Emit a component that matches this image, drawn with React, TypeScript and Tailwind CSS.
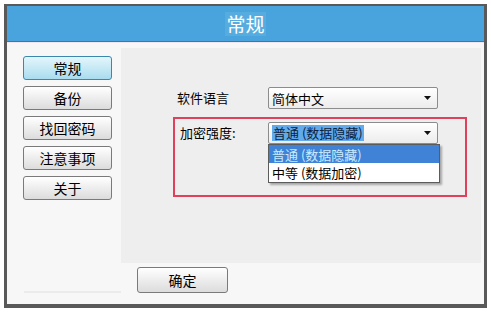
const font = "font-['Noto_Sans_CJK_SC','Noto_Sans',sans-serif]";

const navItems = ["常规", "备份", "找回密码", "注意事项", "关于"];

function Arrow() {
  return (
    <svg width="7" height="4" viewBox="0 0 7 4" className="shrink-0">
      <path d="M0 0 L7 0 L3.5 4 Z" fill="#111" />
    </svg>
  );
}

function Select({ children }: { children: React.ReactNode }) {
  return (
    <div className="flex h-[22px] w-[170px] items-center justify-between rounded-[2px] border border-[#8c8c8c] bg-gradient-to-b from-white to-[#ececec] pl-[3px] pr-[6px]">
      {children}
      <Arrow />
    </div>
  );
}

export default function App() {
  return (
    <div className={`h-[319px] w-[491px] overflow-hidden bg-white pl-[4px] pt-[4px] ${font}`}>
      <div className="flex h-[304px] w-[483px] flex-col border-x-[3px] border-b-[4px] border-t-[2px] border-[#595959] bg-[#f7f7f7]">
        <div className="flex h-[36px] shrink-0 items-center justify-center border-b border-[#3a78b0] bg-[#49a3dc]">
          <span className="bg-[#57acdf] px-[1px] text-[19px] leading-[24px] text-white">常规</span>
        </div>
        <div className="flex flex-1 border-t border-[#f1e4ea]">
          <div className="flex w-[114px] shrink-0 flex-col gap-[6px] pl-[16px] pt-[13px]">
            {navItems.map((item, i) => (
              <div
                key={item}
                className={`flex h-[24px] w-[89px] items-center justify-center rounded-[3px] border text-[14px] leading-none text-black ${
                  i === 0
                    ? "border-[#3b87ae] bg-gradient-to-b from-[#e4f6fc] to-[#a9dcef]"
                    : "border-[#7a7a7a] bg-gradient-to-b from-white to-[#dcdcdc]"
                }`}
              >
                {item}
              </div>
            ))}
            <div className="ml-[1px] mt-[85px] h-[2px] w-[97px] bg-[#ebebeb]" />
          </div>
          <div className="flex flex-1 flex-col pr-[3px] pt-[5px]">
            <div className="flex h-[215px] flex-col bg-[#eeeeee]">
              <div className="flex items-center pl-[56px] pt-[39px] text-[13px] text-black">
                <span className="w-[91px]">软件语言</span>
                <Select>
                  <span className="text-[13px] leading-none">简体中文</span>
                </Select>
              </div>
              <div className="ml-[52px] mt-[8px] h-[80px] w-[294px] border-2 border-[#e0405c]">
                <div className="flex items-center pl-[5px] pt-[3px] text-[13px] text-black">
                  <span className="w-[88px]">加密强度:</span>
                  <div className="relative">
                    <Select>
                      <span className="bg-[#62aaea] px-[1px] text-[13px] leading-[16px] text-[#0b2340]">普通 (数据隐藏)</span>
                    </Select>
                    <div className="absolute left-0 top-[22px] z-10 w-[172px] border border-[#5c5c5c] bg-white shadow-[2px_2px_2px_rgba(0,0,0,0.3)]">
                      <div className="flex h-[18px] items-center bg-[#3f82d6] pl-[3px] text-[13px] leading-none text-[#c8ecff]">
                        普通 (数据隐藏)
                      </div>
                      <div className="flex h-[19px] items-center pl-[3px] text-[13px] leading-none text-black">
                        中等 (数据加密)
                      </div>
                    </div>
                  </div>
                </div>
              </div>
            </div>
            <div className="pl-[16px] pt-[4px]">
              <div className="flex h-[26px] w-[91px] items-center justify-center rounded-[3px] border border-[#7a7a7a] bg-gradient-to-b from-white to-[#dcdcdc] text-[14px] leading-none text-black">
                确定
              </div>
            </div>
          </div>
        </div>
      </div>
    </div>
  );
}
